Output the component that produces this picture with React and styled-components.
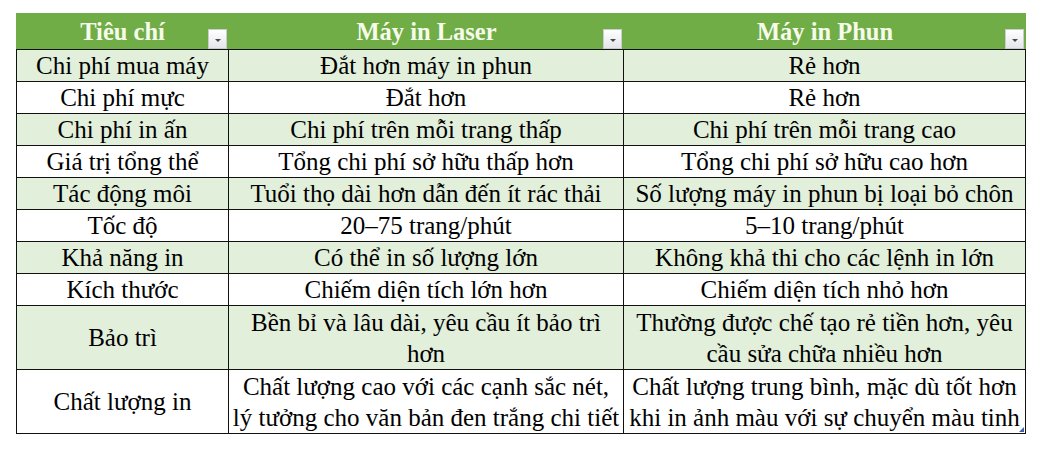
import React from 'react';
import styled, { createGlobalStyle } from 'styled-components';

const GlobalStyle = createGlobalStyle`
    body {
        margin: 0;
        background: #ffffff;
        font-family: "Liberation Serif", "Times New Roman", serif;
    }
`;

const Page = styled.div`
    padding: 13px 0 0 16px;
    width: 1037px;
    height: 450px;
    box-sizing: border-box;
`;

const Table = styled.div`
    display: grid;
    grid-template-columns: 213px 395px 402px;
    width: 1010px;
    position: relative;
`;

const HeadCell = styled.div`
    display: grid;
    grid-template-columns: 23px 1fr 23px;
    height: 37px;
    box-sizing: border-box;
    padding-top: 2px;
    background: #70ad47;
    border-bottom: 1px solid #111;
    color: #f6fbea;
    font-weight: bold;
    font-size: 24.5px;
    line-height: 34px;
`;

const HeadText = styled.span`
    grid-column: 2;
    text-align: center;
    white-space: nowrap;
`;

const FilterButton = styled.span`
    grid-column: 3;
    align-self: end;
    justify-self: end;
    margin-right: 2px;
    width: 19px;
    height: 20px;
    box-sizing: border-box;
    border: 1px solid #c9cdd2;
    background: linear-gradient(#ffffff, #e4e6ea);
    display: flex;
    align-items: center;
    justify-content: center;

    &::after {
        content: '';
        border-left: 3px solid transparent;
        border-right: 3px solid transparent;
        border-top: 3px solid #4a4a4a;
        margin-top: 2px;
    }
`;

const Cell = styled.div`
    box-sizing: border-box;
    height: ${(props) => (props.$tall ? 64 : 32)}px;
    background: ${(props) => (props.$band ? '#e2efda' : '#ffffff')};
    border-right: 1px solid #111;
    border-bottom: 1px solid #111;
    border-left: ${(props) => (props.$first ? '1px solid #111' : 'none')};
    display: flex;
    flex-direction: column;
    justify-content: center;
    align-items: center;
    overflow: hidden;
    color: #000;
    font-size: 25px;
    line-height: 31px;
    white-space: nowrap;
`;

const Line = styled.span`
    display: block;
    text-align: center;
`;

const ResizeHandle = styled.span`
    position: absolute;
    right: 2px;
    bottom: 2px;
    width: 0;
    height: 0;
    border-left: 5px solid transparent;
    border-bottom: 5px solid #3f5ea8;
`;

const headers = ['Tiêu chí', 'Máy in Laser', 'Máy in Phun'];

const rows = [
    [['Chi phí mua máy'], ['Đắt hơn máy in phun'], ['Rẻ hơn']],
    [['Chi phí mực'], ['Đắt hơn'], ['Rẻ hơn']],
    [['Chi phí in ấn'], ['Chi phí trên mỗi trang thấp'], ['Chi phí trên mỗi trang cao']],
    [['Giá trị tổng thể'], ['Tổng chi phí sở hữu thấp hơn'], ['Tổng chi phí sở hữu cao hơn']],
    [['Tác động môi'], ['Tuổi thọ dài hơn dẫn đến ít rác thải'], ['Số lượng máy in phun bị loại bỏ chôn']],
    [['Tốc độ'], ['20–75 trang/phút'], ['5–10 trang/phút']],
    [['Khả năng in'], ['Có thể in số lượng lớn'], ['Không khả thi cho các lệnh in lớn']],
    [['Kích thước'], ['Chiếm diện tích lớn hơn'], ['Chiếm diện tích nhỏ hơn']],
    [
        ['Bảo trì'],
        ['Bền bỉ và lâu dài, yêu cầu ít bảo trì', 'hơn'],
        ['Thường được chế tạo rẻ tiền hơn, yêu', 'cầu sửa chữa nhiều hơn'],
    ],
    [
        ['Chất lượng in'],
        ['Chất lượng cao với các cạnh sắc nét,', 'lý tưởng cho văn bản đen trắng chi tiết'],
        ['Chất lượng trung bình, mặc dù tốt hơn', 'khi in ảnh màu với sự chuyển màu tinh'],
    ],
];

export default function App() {
    return (
        <>
            <GlobalStyle />
            <Page>
                <Table>
                    {headers.map((h) => (
                        <HeadCell key={h}>
                            <HeadText>{h}</HeadText>
                            <FilterButton />
                        </HeadCell>
                    ))}
                    {rows.map((row, r) => {
                        const tall = row.some((c) => c.length > 1);
                        return row.map((cell, c) => (
                            <Cell key={`${r}-${c}`} $band={r % 2 === 0} $tall={tall} $first={c === 0}>
                                {cell.map((line) => (
                                    <Line key={line}>{line}</Line>
                                ))}
                            </Cell>
                        ));
                    })}
                    <ResizeHandle />
                </Table>
            </Page>
        </>
    );
}
